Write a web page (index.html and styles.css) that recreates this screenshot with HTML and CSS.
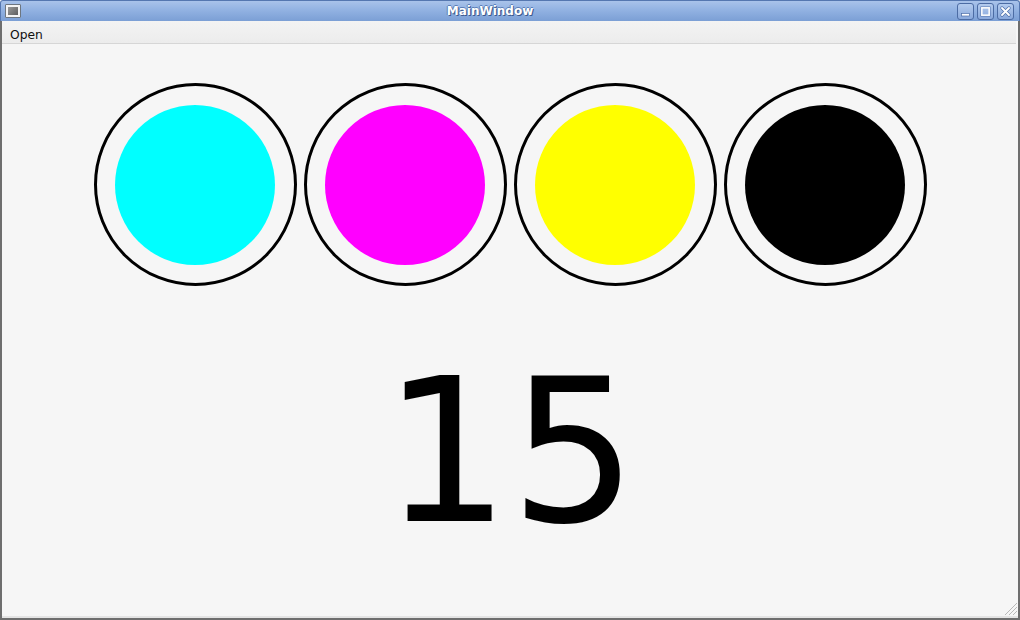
FILE: index.html
```html
<!DOCTYPE html>
<html>
<head>
<meta charset="utf-8">
<link rel="stylesheet" href="styles.css">
</head>
<body>
<div class="window">
  <div class="titlebar">
    <div class="appicon"><span class="appicon-inner"></span></div>
    <div class="title">MainWindow</div>
    <div class="buttons">
      <div class="wbtn">
        <svg width="15" height="15" viewBox="0 0 15 15"><rect x="3.5" y="9.5" width="8" height="2.5" fill="#fff" stroke="#4d6ea8" stroke-width="0.7"/></svg>
      </div>
      <div class="wbtn">
        <svg width="15" height="15" viewBox="0 0 15 15"><rect x="3.8" y="3.8" width="7.4" height="7.4" fill="none" stroke="#fff" stroke-width="1.6"/><rect x="2.8" y="2.8" width="9.4" height="9.4" fill="none" stroke="#4d6ea8" stroke-width="0.5"/></svg>
      </div>
      <div class="wbtn">
        <svg width="15" height="15" viewBox="0 0 15 15"><path d="M4 4 L11 11 M11 4 L4 11" stroke="#4d6ea8" stroke-width="3.2" stroke-linecap="round"/><path d="M4 4 L11 11 M11 4 L4 11" stroke="#fff" stroke-width="1.9" stroke-linecap="round"/></svg>
      </div>
    </div>
  </div>
  <div class="frame">
    <div class="menubar"><span class="menuitem">Open</span></div>
    <div class="content">
      <div class="rings">
        <div class="ring"><div class="dot cyan"></div></div>
        <div class="ring"><div class="dot magenta"></div></div>
        <div class="ring"><div class="dot yellow"></div></div>
        <div class="ring"><div class="dot black"></div></div>
      </div>
      <div class="number">15</div>
      <svg class="grip" width="14" height="14" viewBox="0 0 14 14">
        <g fill="#b9b9b9">
          <rect x="12" y="1" width="1" height="1"/><rect x="11" y="2" width="1" height="1"/><rect x="10" y="3" width="1" height="1"/><rect x="9" y="4" width="1" height="1"/><rect x="8" y="5" width="1" height="1"/><rect x="7" y="6" width="1" height="1"/><rect x="6" y="7" width="1" height="1"/><rect x="5" y="8" width="1" height="1"/><rect x="4" y="9" width="1" height="1"/><rect x="3" y="10" width="1" height="1"/><rect x="2" y="11" width="1" height="1"/><rect x="1" y="12" width="1" height="1"/>
          <rect x="12" y="5" width="1" height="1"/><rect x="11" y="6" width="1" height="1"/><rect x="10" y="7" width="1" height="1"/><rect x="9" y="8" width="1" height="1"/><rect x="8" y="9" width="1" height="1"/><rect x="7" y="10" width="1" height="1"/><rect x="6" y="11" width="1" height="1"/><rect x="5" y="12" width="1" height="1"/>
          <rect x="12" y="9" width="1" height="1"/><rect x="11" y="10" width="1" height="1"/><rect x="10" y="11" width="1" height="1"/><rect x="9" y="12" width="1" height="1"/>
        </g>
      </svg>
    </div>
  </div>
</div>
</body>
</html>
```

FILE: styles.css
```css
* { box-sizing: border-box; }
html, body {
  margin: 0;
  padding: 0;
  width: 1020px;
  height: 620px;
  overflow: hidden;
  background: #f6f6f6;
}
.window {
  width: 1020px;
  height: 620px;
  display: flex;
  flex-direction: column;
  font-family: "DejaVu Sans", sans-serif;
}
.titlebar {
  height: 21px;
  flex: none;
  display: flex;
  align-items: center;
  position: relative;
  background: linear-gradient(to bottom, #a9c3ea 0%, #92b2e2 45%, #7b9fd5 100%);
  border-top: 1px solid #5577b0;
  border-left: 1px solid #5577b0;
  border-right: 1px solid #5577b0;
  border-radius: 3px 3px 0 0;
}
.appicon {
  width: 16px;
  height: 14px;
  margin-left: 4px;
  background: #f4f4f4;
  border: 1px solid #6d7680;
  border-radius: 1px;
  padding: 2px;
  display: flex;
}
.appicon-inner {
  flex: 1;
  background: linear-gradient(135deg, #9a9a9a, #5e5e5e);
}
.title {
  flex: 1;
  text-align: center;
  color: #ffffff;
  font-weight: bold;
  font-size: 12px;
  padding-left: 2px;
  text-shadow: 1px 1px 0 #3d5a8e, -1px 0 0 #5d7fb8, 0 -1px 0 #5d7fb8;
}
.buttons {
  display: flex;
  gap: 3px;
  margin-right: 5px;
}
.wbtn {
  width: 17px;
  height: 17px;
  border: 1px solid #4c6ca4;
  border-radius: 3px;
  background: linear-gradient(to bottom, #b3cbee, #8aa9dc);
  display: flex;
  align-items: center;
  justify-content: center;
  overflow: hidden;
}
.wbtn svg { display: block; flex: none; }
.frame {
  flex: 1;
  display: flex;
  flex-direction: column;
  border-left: 2px solid #6e6e6e;
  border-right: 2px solid #6e6e6e;
  border-bottom: 2px solid #6e6e6e;
}
.menubar {
  height: 23px;
  flex: none;
  background: linear-gradient(to bottom, #f3f3f3, #ececec);
  border-bottom: 1px solid #d6d6d6;
  display: flex;
  align-items: center;
  padding-left: 8px;
  margin-right: 2px;
}
.menuitem {
  font-size: 12.3px;
  color: #111;
  padding-top: 5px;
}
.content {
  flex: 1;
  position: relative;
  background: #f6f6f6;
  border-bottom: 2px solid #e4e4e4;
  display: flex;
  flex-direction: column;
  align-items: center;
  padding-top: 39px;
}
.rings {
  display: flex;
  gap: 7px;
}
.ring {
  width: 203px;
  height: 203px;
  border: 3px solid #000;
  border-radius: 50%;
  display: flex;
  align-items: center;
  justify-content: center;
}
.dot {
  width: 160px;
  height: 160px;
  border-radius: 50%;
}
.cyan { background: #00ffff; }
.magenta { background: #ff00ff; }
.yellow { background: #ffff00; }
.black { background: #000000; }
.number {
  margin-top: 66px;
  font-family: "DejaVu Sans", sans-serif;
  font-size: 200px;
  line-height: 200px;
  color: #000;
}
.grip {
  position: absolute;
  right: 0;
  bottom: 0;
}
```
